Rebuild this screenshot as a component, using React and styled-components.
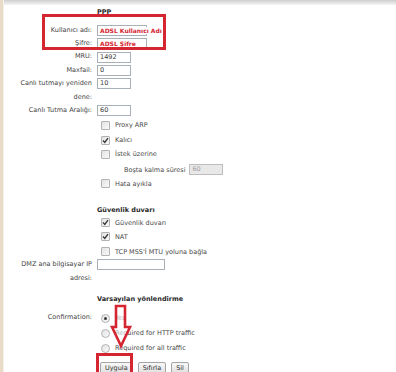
import React from "react";
import styled, { createGlobalStyle } from "styled-components";

const GlobalStyle = createGlobalStyle`
  body {
    margin: 0;
    background: #fff;
    font-family: "DejaVu Sans", Verdana, sans-serif;
    font-size: 6.5px;
    color: #444;
  }
`;

const RED = "#d52531";

function Check({ checked }) {
  return (
    <Box>
      {checked && (
        <svg width="7" height="7" viewBox="0 0 7 7">
          <path d="M1 3.6 L2.8 5.4 L6 1.2" fill="none" stroke="#3a3a3a" strokeWidth="1.4" />
        </svg>
      )}
    </Box>
  );
}

function Option({ checked, radio, children }) {
  return (
    <OptionWrap>
      {radio ? <Round>{checked && <Dot />}</Round> : <Check checked={checked} />}
      <span>{children}</span>
    </OptionWrap>
  );
}

export default function App() {
  return (
    <>
      <GlobalStyle />
      <Page>
        <Strip />
        <Main>
          <TopBar />
          <Form>
            <Row $h={14}>
              <span />
              <Heading>PPP</Heading>
            </Row>
            <Row $h={13} $mt={5}>
              <Label>Kullanıcı adı:</Label>
              <TextBox $w={50}>
                <RedValue>ADSL Kullanıcı Adı</RedValue>
              </TextBox>
            </Row>
            <Row $h={13}>
              <Label>Şifre:</Label>
              <TextBox $w={50}>
                <RedValue>ADSL Şifre</RedValue>
              </TextBox>
            </Row>
            <Row $h={14}>
              <Label>MRU:</Label>
              <TextBox $w={34}>1492</TextBox>
            </Row>
            <Row $h={13}>
              <Label>Maxfail:</Label>
              <TextBox $w={34}>0</TextBox>
            </Row>
            <Row $h={27} $start>
              <Label>Canlı tutmayı yeniden dene:</Label>
              <TextBox $w={34} $mt={1}>10</TextBox>
            </Row>
            <Row $h={13}>
              <Label>Canlı Tutma Aralığı:</Label>
              <TextBox $w={34}>60</TextBox>
            </Row>
            <Row $h={16}>
              <span />
              <Option>Proxy ARP</Option>
            </Row>
            <Row $h={14}>
              <span />
              <Option checked>Kalıcı</Option>
            </Row>
            <Row $h={14}>
              <span />
              <Option>İstek üzerine</Option>
            </Row>
            <Row $h={17}>
              <span />
              <Idle>
                <span>Boşta kalma süresi</span>
                <TextBox $w={34} $disabled>60</TextBox>
              </Idle>
            </Row>
            <Row $h={11}>
              <span />
              <Option>Hata ayıkla</Option>
            </Row>
            <Row $h={14} $mt={14}>
              <span />
              <Heading>Güvenlik duvarı</Heading>
            </Row>
            <Row $h={11}>
              <span />
              <Option checked>Güvenlik duvarı</Option>
            </Row>
            <Row $h={17}>
              <span />
              <Option checked>NAT</Option>
            </Row>
            <Row $h={13}>
              <span />
              <Option>TCP MSS'İ MTU yoluna bağla</Option>
            </Row>
            <Row $h={27} $start>
              <Label>DMZ ana bilgisayar IP adresi:</Label>
              <TextBox $w={68} $mt={1} />
            </Row>
            <Row $h={14} $mt={7}>
              <span />
              <Heading>Varsayılan yönlendirme</Heading>
            </Row>
            <Row $h={16} $mt={4}>
              <Label>Confirmation:</Label>
              <Option radio checked>Yes</Option>
            </Row>
            <Row $h={14}>
              <span />
              <Option radio>Required for HTTP traffic</Option>
            </Row>
            <Row $h={16}>
              <span />
              <Option radio>Required for all traffic</Option>
            </Row>
            <Row $h={13} $mt={6} $start>
              <span />
              <Buttons>
                <Button>Uygula</Button>
                <Button>Sıfırla</Button>
                <Button>Sil</Button>
              </Buttons>
            </Row>
          </Form>
        </Main>

        <Marker $x={42} $y={14} $w={124} $h={36} />
        <Marker $x={96} $y={353} $w={37} $h={26} />
        <Arrow width="40" height="50" viewBox="0 0 40 50">
          <polygon
            points="6,2 15,2 15,23 20,23 11,42 2,23 6,23"
            fill="rgba(255,255,255,0.55)"
            stroke={RED}
            strokeWidth="2.6"
            strokeLinejoin="miter"
          />
        </Arrow>
      </Page>
    </>
  );
}

const Page = styled.div`
  position: relative;
  display: flex;
  width: 396px;
  height: 372px;
  overflow: hidden;
`;

const Strip = styled.div`
  width: 3px;
  flex-shrink: 0;
  background: #e9dcc6;
  border-right: 1px solid #f6f1e8;
`;

const Main = styled.div`
  flex: 1;
  display: flex;
  flex-direction: column;
`;

const TopBar = styled.div`
  height: 5px;
  flex-shrink: 0;
  background: linear-gradient(to bottom, #cdcdcd 0, #dedede 2px, #ececec 4px, #f7f7f7 5px);
`;

const Form = styled.div`
  padding-left: 14px;
`;

const Row = styled.div`
  display: grid;
  grid-template-columns: 74px 1fr;
  column-gap: 5px;
  height: ${(p) => p.$h}px;
  margin-top: ${(p) => p.$mt || 0}px;
  align-items: ${(p) => (p.$start ? "start" : "center")};
`;

const Label = styled.div`
  text-align: right;
  line-height: 13.5px;
  color: #444;
`;

const Heading = styled.div`
  font-weight: bold;
  color: #2a2a2a;
`;

const TextBox = styled.div`
  box-sizing: border-box;
  width: ${(p) => p.$w}px;
  height: 11px;
  margin-top: ${(p) => p.$mt || 0}px;
  padding: 0 2px;
  border: 1px solid ${(p) => (p.$disabled ? "#bdbdbd" : "#aab0b8")};
  background: ${(p) => (p.$disabled ? "#e8e8e8" : "#fff")};
  color: ${(p) => (p.$disabled ? "#a0a0a0" : "#3a3a3a")};
  line-height: 9px;
  white-space: nowrap;
  overflow: visible;
`;

const RedValue = styled.span`
  position: relative;
  font-size: 6px;
  font-weight: bold;
  color: ${RED};
  background: #fff;
`;

const OptionWrap = styled.label`
  display: flex;
  align-items: center;
  gap: 5px;
  padding-left: 4px;
  color: #4a4a4a;
`;

const Box = styled.span`
  box-sizing: border-box;
  width: 9px;
  height: 9px;
  display: flex;
  align-items: center;
  justify-content: center;
  border: 1px solid #b2b2b2;
  border-radius: 1px;
  background: linear-gradient(135deg, #e2e2e2, #fafafa);
`;

const Round = styled(Box)`
  border-radius: 50%;
`;

const Dot = styled.span`
  width: 3px;
  height: 3px;
  border-radius: 50%;
  background: #3a3a3a;
`;

const Idle = styled.div`
  display: flex;
  align-items: center;
  gap: 4px;
  padding-left: 27px;
  color: #4a4a4a;
`;

const Buttons = styled.div`
  display: flex;
  gap: 5px;
  padding-left: 3px;
`;

const Button = styled.button`
  height: 12px;
  padding: 0 4px;
  font-family: inherit;
  font-size: 6.5px;
  line-height: 10px;
  color: #333;
  border: 1px solid #a4a4a4;
  border-radius: 2px;
  background: linear-gradient(to bottom, #f8f8f8, #e0e0e0);
`;

const Marker = styled.div`
  position: absolute;
  left: ${(p) => p.$x}px;
  top: ${(p) => p.$y}px;
  width: ${(p) => p.$w}px;
  height: ${(p) => p.$h}px;
  box-sizing: border-box;
  border: 3px solid ${RED};
  pointer-events: none;
`;

const Arrow = styled.svg`
  position: absolute;
  left: 110px;
  top: 304px;
  pointer-events: none;
`;
